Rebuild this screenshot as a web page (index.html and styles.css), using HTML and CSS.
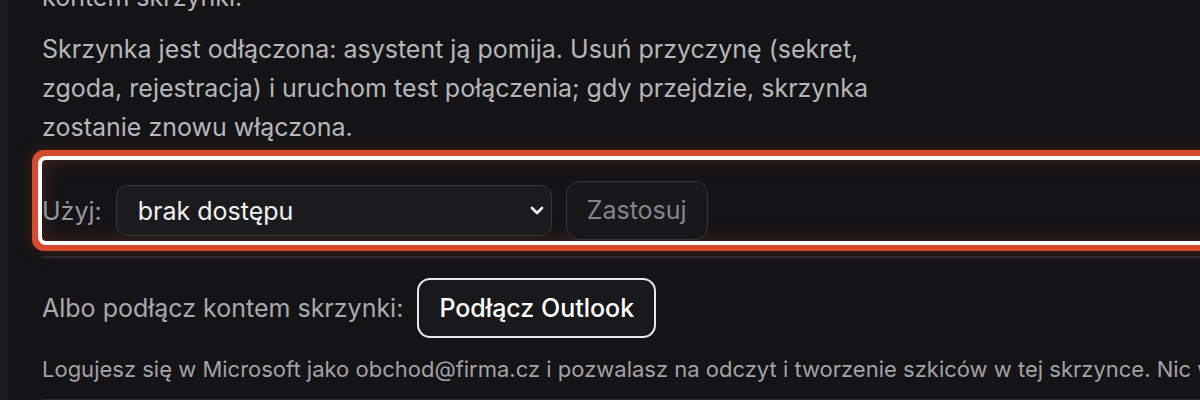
FILE: index.html
```html
<!DOCTYPE html>
<html lang="pl">
<head>
    <meta charset="UTF-8">
    <meta name="viewport" content="width=device-width, initial-scale=1.0">
    <title>Skrzynka</title>
    <link rel="stylesheet" href="styles.css">
</head>
<body>
<div class="layout">
    <aside class="rail"></aside>
    <main class="panel">
        <p class="text narrow">Wybierz sposób dostępu albo połącz się bezpośrednio<br>kontem skrzynki.</p>
        <p class="text narrow">Skrzynka jest odłączona: asystent ją pomija. Usuń przyczynę (sekret, zgoda, rejestracja) i uruchom test połączenia; gdy przejdzie, skrzynka zostanie znowu włączona.</p>

        <div class="use-row highlight">
            <label class="use-label" for="access">Użyj:</label>
            <div class="select-wrap">
                <select id="access" class="select">
                    <option>brak dostępu</option>
                    <option>sekret aplikacji</option>
                    <option>konto skrzynki</option>
                </select>
                <svg class="chevron" width="14" height="9" viewBox="0 0 14 9" aria-hidden="true">
                    <path d="M2 2l5 5 5-5" fill="none" stroke="#f2f2f2" stroke-width="2.6" stroke-linecap="round" stroke-linejoin="round"/>
                </svg>
            </div>
            <button class="btn btn-muted" disabled>Zastosuj</button>
        </div>

        <div class="connect">
            <div class="connect-row">
                <span class="connect-label">Albo podłącz kontem skrzynki:</span>
                <button class="btn btn-outline">Podłącz Outlook</button>
            </div>
            <p class="hint">Logujesz się w Microsoft jako obchod@firma.cz i pozwalasz na odczyt i tworzenie szkiców w tej skrzynce. Nic więcej nie robimy bez Twojej zgody.</p>
        </div>
    </main>
</div>
</body>
</html>
```

FILE: styles.css
```css
/* dark settings panel, zoomed view */
html, body {
    margin: 0;
    padding: 0;
    height: 100%;
    overflow: hidden;
    background-color: #141416;
    font-family: Inter, "Noto Sans", Arial, sans-serif;
}
.layout {
    display: flex;
    min-height: 100%;
}
.rail {
    flex: 0 0 8px;
    background-color: #1c1c1f;
}
.panel {
    flex: 0 0 1400px;
    margin-top: -61px;
    padding-left: 34px;
}
.text {
    margin: 0 0 13px;
    font-size: 25px;
    line-height: 39px;
    color: #b6b6bb;
}
.narrow {
    max-width: 880px;
}
.use-row {
    display: flex;
    align-items: center;
    gap: 14px;
    margin-top: 13px;
    padding: 21px 0 1px;
    border-radius: 4px;
}
.highlight {
    box-shadow:
        0 0 0 4px #ffffff,
        0 0 0 10px #d64a2d,
        0 0 14px 10px rgba(214, 74, 45, 0.25),
        inset 0 0 18px rgba(214, 74, 45, 0.28);
}
.use-label {
    font-size: 25px;
    color: #96969c;
}
.select-wrap {
    position: relative;
}
.select {
    -webkit-appearance: none;
    appearance: none;
    width: 436px;
    height: 51px;
    padding: 0 40px 0 21px;
    font-family: inherit;
    font-size: 25px;
    color: #f1f1f3;
    background-color: #1b1b1e;
    border: 1px solid #37373b;
    border-radius: 11px;
}
.chevron {
    position: absolute;
    right: 8px;
    top: 21px;
    pointer-events: none;
}
.btn {
    font-family: inherit;
    font-size: 25px;
    line-height: 29px;
    border-radius: 13px;
    cursor: pointer;
}
.btn-muted {
    height: 59px;
    padding: 0 20px;
    color: #85858b;
    background-color: #18181b;
    border: 1px solid #36363a;
    cursor: default;
}
.connect {
    margin-top: 15px;
    border-top: 2px solid #2c2c30;
}
.connect-row {
    display: flex;
    align-items: center;
    gap: 14px;
    padding-top: 20px;
}
.connect-label {
    font-size: 25px;
    color: #a9a9ae;
}
.btn-outline {
    height: 60px;
    padding: 0 20px;
    font-weight: 500;
    color: #ffffff;
    background-color: #19191c;
    border: 2px solid #e8e8ea;
}
.hint {
    margin: 15px 0 0;
    padding-bottom: 14px;
    font-size: 22px;
    line-height: 32px;
    color: #a2a2a7;
    white-space: nowrap;
    border-bottom: 2px solid #2c2c30;
}
```
